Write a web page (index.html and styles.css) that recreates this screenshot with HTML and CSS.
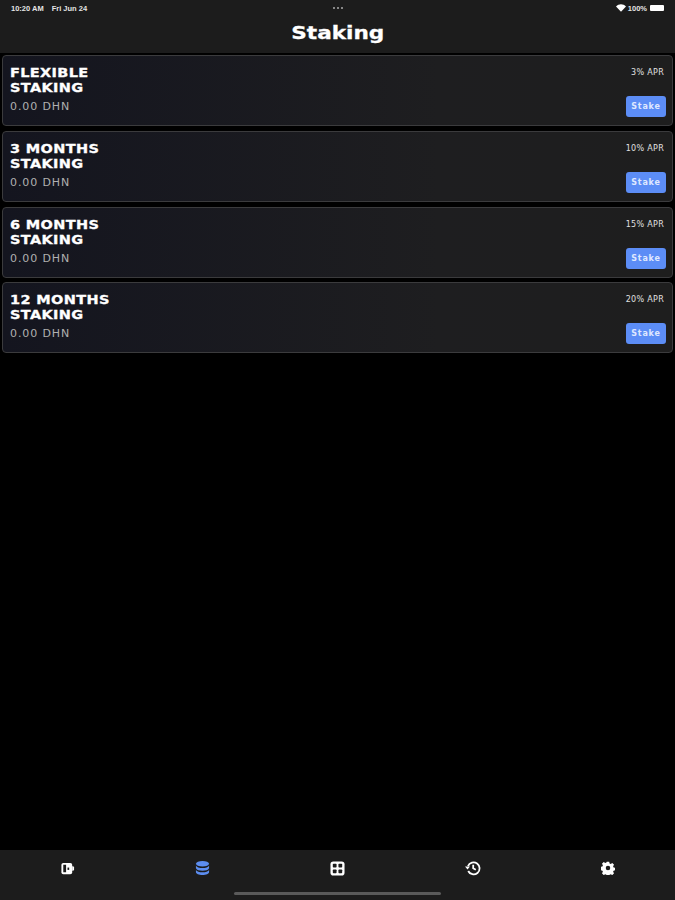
FILE: index.html
```html
<!DOCTYPE html>
<html lang="en">
<head>
    <meta charset="UTF-8">
    <title>Staking</title>
    <link rel="stylesheet" href="styles.css">
</head>
<body>

<div class="app">
    <header class="topbar">
        <div class="status">
            <div class="status-left"><span>10:20 AM</span><span>Fri Jun 24</span></div>
            <div class="status-dots"><i></i><i></i><i></i></div>
            <div class="status-right">
                <svg class="wifi" viewBox="0 0 12 9" width="10" height="8"><path d="M6 9 0 2.8C3.4-.9 8.600-.9 12 2.800Z" fill="#fff"/></svg>
                <span>100%</span>
                <span class="battery"></span>
            </div>
        </div>
        <h1>Staking</h1>
    </header>

    <main class="list">
        <section class="card">
            <div class="card-left">
                <h2>FLEXIBLE<br>STAKING</h2>
                <p class="amount">0.00 DHN</p>
            </div>
            <div class="card-right">
                <span class="apr">3% APR</span>
                <button class="stake">Stake</button>
            </div>
        </section>
        <section class="card">
            <div class="card-left">
                <h2>3 MONTHS<br>STAKING</h2>
                <p class="amount">0.00 DHN</p>
            </div>
            <div class="card-right">
                <span class="apr">10% APR</span>
                <button class="stake">Stake</button>
            </div>
        </section>
        <section class="card">
            <div class="card-left">
                <h2>6 MONTHS<br>STAKING</h2>
                <p class="amount">0.00 DHN</p>
            </div>
            <div class="card-right">
                <span class="apr">15% APR</span>
                <button class="stake">Stake</button>
            </div>
        </section>
        <section class="card">
            <div class="card-left">
                <h2>12 MONTHS<br>STAKING</h2>
                <p class="amount">0.00 DHN</p>
            </div>
            <div class="card-right">
                <span class="apr">20% APR</span>
                <button class="stake">Stake</button>
            </div>
        </section>
    </main>

    <nav class="tabbar">
        <div class="tabs">
            <div class="tab">
                <svg viewBox="0 0 16 16" width="15" height="15"><rect x="1.500" y="2" width="11.500" height="12" rx="2" fill="#fff"/><rect x="3.500" y="4" width="3" height="8" fill="#1c1c1c"/><rect x="8" y="7" width="1.800" height="2.500" fill="#1c1c1c"/><path d="M13 5.500h.5a1.500 1.500 0 0 1 1.500 1.500v2a1.500 1.500 0 0 1-1.500 1.500H13Z" fill="#fff"/></svg>
            </div>
            <div class="tab">
                <svg viewBox="0 0 16 16" width="15" height="16" fill="#5c8df0"><ellipse cx="8" cy="3.500" rx="7" ry="3"/><path d="M1 5.200c1 1.900 3.600 2.700 7 2.700s6-.8 7-2.700v3c-1 1.900-3.600 2.600-7 2.600s-6-.7-7-2.600Z"/><path d="M1 10c1 1.800 3.600 2.500 7 2.500s6-.7 7-2.500v2.500c0 1.700-3.100 3-7 3s-7-1.300-7-3Z"/></svg>
            </div>
            <div class="tab">
                <svg viewBox="0 0 16 16" width="15" height="15"><rect x=".5" y=".5" width="15" height="15" rx="3" fill="#fff"/><g fill="#1c1c1c"><rect x="3" y="3" width="4" height="4" rx=".8"/><rect x="9" y="3" width="4" height="4" rx=".8"/><rect x="3" y="9" width="4" height="4" rx=".8"/><rect x="9" y="9" width="4" height="4" rx=".8"/></g></svg>
            </div>
            <div class="tab">
                <svg viewBox="0 0 16 16" width="16" height="16" fill="none" stroke="#fff" stroke-width="1.800"><path d="M3 6.200A6 6 0 1 1 3.200 11"/><path d="M8.200 4.800v3.500l2.600 1.500"/><path d="M0 6.500h5L2.500 9.500Z" fill="#fff" stroke="none"/></svg>
            </div>
            <div class="tab">
                <svg viewBox="0 0 16 16" width="14" height="14"><path fill="#fff" fill-rule="evenodd" d="M6.600.8h2.800l.4 2 1.300.6 1.800-1.100 2 2-1.100 1.800.6 1.300 2 .4v2.800l-2 .4-.6 1.300 1.100 1.800-2 2-1.800-1.100-1.300.6-.4 2H6.600l-.4-2-1.300-.6-1.800 1.100-2-2 1.100-1.800-.6-1.300-2-.4V6.600l2-.4.6-1.300-1.100-1.800 2-2 1.800 1.100 1.300-.6ZM8 5.400a2.600 2.600 0 1 0 0 5.200 2.600 2.600 0 0 0 0-5.200Z"/></svg>
            </div>
        </div>
        <div class="home-bar"></div>
    </nav>
</div>

</body>
</html>
```
FILE: styles.css
```css
html, body {
    margin: 0;
    padding: 0;
    height: 100%;
    background-color: #000;
}
body {
    font-family: "DejaVu Sans", sans-serif;
    color: #fff;
}
.app {
    display: flex;
    flex-direction: column;
    height: 900px;
}
.topbar {
    height: 53px;
    flex-shrink: 0;
    background-color: #1c1c1c;
}
.status {
    display: grid;
    grid-template-columns: 1fr auto 1fr;
    align-items: center;
    height: 16px;
    padding: 0 11px;
    font-family: "Liberation Sans", sans-serif;
    font-size: 7.500px;
    font-weight: 700;
    color: #e4e4e4;
}
.status-left {
    display: flex;
    gap: 8px;
}
.status-dots {
    display: flex;
    gap: 2px;
}
.status-dots i {
    width: 2px;
    height: 2px;
    border-radius: 50%;
    background-color: #aaa;
}
.status-right {
    display: flex;
    justify-content: flex-end;
    align-items: center;
    gap: 2px;
}
.battery {
    width: 14px;
    height: 6px;
    margin-left: 1px;
    border-radius: 1px;
    background-color: #fff;
}
h1 {
    width: fit-content;
    margin: 4px auto 0 auto;
    font-size: 18px;
    line-height: 26px;
    font-weight: 700;
    transform: scaleX(1.2);
    -webkit-text-stroke: .3px #fff;
}
.list {
    flex: 1;
    display: flex;
    flex-direction: column;
    gap: 4.800px;
    padding: 2px 2px 0 2px;
}
.card {
    display: flex;
    justify-content: space-between;
    height: 71px;
    box-sizing: border-box;
    padding: 9px 6px 8px 7px;
    border: 1px solid #3b3b3d;
    border-radius: 4px;
    background: linear-gradient(to right, #14151f, #1e1e20 65%, #1e1e1e);
}
.card h2 {
    margin: 0;
    font-size: 12.500px;
    line-height: 15px;
    font-weight: 700;
    letter-spacing: .3px;
    transform: scaleX(1.16);
    transform-origin: left center;
    -webkit-text-stroke: .3px #fff;
}
.amount {
    margin: 5px 0 0 0;
    font-size: 11px;
    line-height: 14px;
    letter-spacing: .9px;
    color: #b0b0b0;
}
.card-right {
    display: flex;
    flex-direction: column;
    justify-content: space-between;
    align-items: flex-end;
}
.apr {
    margin: 2px 2px 0 0;
    font-size: 8px;
    line-height: 12px;
    letter-spacing: .3px;
    color: #e0e0e0;
}
.stake {
    width: 40px;
    height: 21px;
    padding: 0;
    border: none;
    border-radius: 3px;
    background-color: #5c8df6;
    color: #dfe8ff;
    font-family: inherit;
    font-size: 8px;
    font-weight: 700;
    letter-spacing: .8px;
}
.tabbar {
    height: 50px;
    flex-shrink: 0;
    background-color: #1c1c1c;
}
.tabs {
    display: grid;
    grid-template-columns: repeat(5, 135px);
    height: 36px;
}
.tab {
    display: flex;
    justify-content: center;
    align-items: center;
}
.home-bar {
    width: 207px;
    height: 3px;
    margin: 6px auto 0 auto;
    border-radius: 2px;
    background-color: #5a5a5a;
}
```
